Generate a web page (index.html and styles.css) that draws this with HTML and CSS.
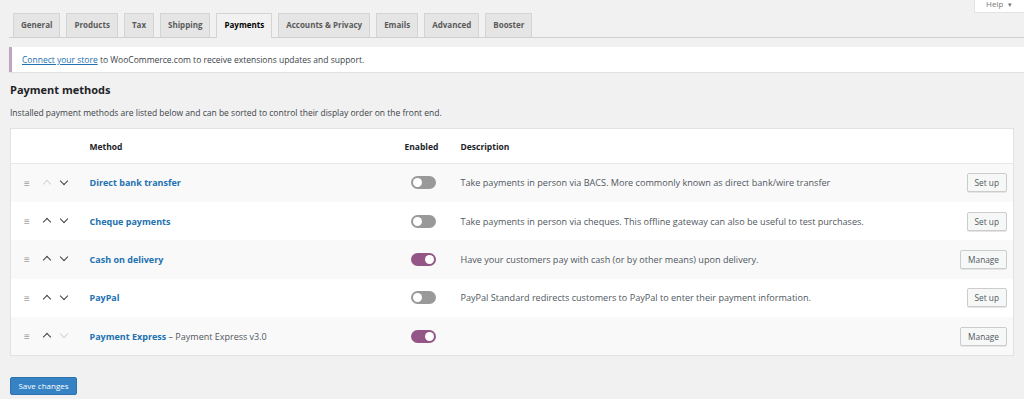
FILE: index.html
```html
<!DOCTYPE html>
<html lang="en">
<head>
    <meta charset="UTF-8">
    <title>WooCommerce settings - Payments</title>
    <link rel="stylesheet" href="styles.css">
</head>
<body>
    <!-- Help tab -->
    <div class="help-bar">
        <span class="help-tab">Help <span class="caret">&#9662;</span></span>
    </div>

    <div class="wrap">
        <!-- Tabs -->
        <nav class="nav-tabs">
            <a class="tab">General</a>
            <a class="tab">Products</a>
            <a class="tab">Tax</a>
            <a class="tab">Shipping</a>
            <a class="tab active">Payments</a>
            <a class="tab">Accounts &amp; Privacy</a>
            <a class="tab">Emails</a>
            <a class="tab">Advanced</a>
            <a class="tab">Booster</a>
        </nav>

        <!-- Notice -->
        <div class="notice">
            <a class="link">Connect your store</a> to WooCommerce.com to receive extensions updates and support.
        </div>

        <h2 class="title">Payment methods</h2>
        <p class="intro">Installed payment methods are listed below and can be sorted to control their display order on the front end.</p>

        <!-- Payment methods table -->
        <table class="methods">
            <thead>
                <tr>
                    <th class="col-sort"></th>
                    <th class="col-name">Method</th>
                    <th class="col-status">Enabled</th>
                    <th class="col-desc">Description</th>
                    <th class="col-action"></th>
                </tr>
            </thead>
            <tbody>
                <tr>
                    <td class="col-sort"><span class="sort-icons"><span class="drag">&#8801;</span><span class="chev up off"></span><span class="chev down"></span></span></td>
                    <td class="col-name"><a class="method-link">Direct bank transfer</a></td>
                    <td class="col-status"><span class="toggle"></span></td>
                    <td class="col-desc">Take payments in person via BACS. More commonly known as direct bank/wire transfer</td>
                    <td class="col-action"><button class="btn">Set up</button></td>
                </tr>
                <tr>
                    <td class="col-sort"><span class="sort-icons"><span class="drag">&#8801;</span><span class="chev up"></span><span class="chev down"></span></span></td>
                    <td class="col-name"><a class="method-link">Cheque payments</a></td>
                    <td class="col-status"><span class="toggle"></span></td>
                    <td class="col-desc">Take payments in person via cheques. This offline gateway can also be useful to test purchases.</td>
                    <td class="col-action"><button class="btn">Set up</button></td>
                </tr>
                <tr>
                    <td class="col-sort"><span class="sort-icons"><span class="drag">&#8801;</span><span class="chev up"></span><span class="chev down"></span></span></td>
                    <td class="col-name"><a class="method-link">Cash on delivery</a></td>
                    <td class="col-status"><span class="toggle on"></span></td>
                    <td class="col-desc">Have your customers pay with cash (or by other means) upon delivery.</td>
                    <td class="col-action"><button class="btn">Manage</button></td>
                </tr>
                <tr>
                    <td class="col-sort"><span class="sort-icons"><span class="drag">&#8801;</span><span class="chev up"></span><span class="chev down"></span></span></td>
                    <td class="col-name"><a class="method-link">PayPal</a></td>
                    <td class="col-status"><span class="toggle"></span></td>
                    <td class="col-desc">PayPal Standard redirects customers to PayPal to enter their payment information.</td>
                    <td class="col-action"><button class="btn">Set up</button></td>
                </tr>
                <tr>
                    <td class="col-sort"><span class="sort-icons"><span class="drag">&#8801;</span><span class="chev up"></span><span class="chev down off"></span></span></td>
                    <td class="col-name"><a class="method-link">Payment Express</a> <span class="method-sub">&ndash; Payment Express v3.0</span></td>
                    <td class="col-status"><span class="toggle on"></span></td>
                    <td class="col-desc"></td>
                    <td class="col-action"><button class="btn">Manage</button></td>
                </tr>
            </tbody>
        </table>

        <button class="btn-primary">Save changes</button>
    </div>
</body>
</html>
```

FILE: styles.css
```css
/* Base */
* { margin: 0; padding: 0; box-sizing: border-box; }

body {
    background: #f1f1f1;
    font-family: 'Open Sans', 'Noto Sans', sans-serif;
    font-size: 8.5px;
    color: #3c434a;
    overflow: hidden;
}

a { cursor: pointer; }

/* Help tab */
.help-bar {
    display: flex;
    justify-content: flex-end;
    height: 12px;
}

.help-tab {
    width: 49px;
    height: 12px;
    background: #ffffff;
    box-shadow: 0 0 0 1px #e3e3e3;
    color: #777;
    font-size: 8px;
    line-height: 8px;
    padding-left: 11px;
}

.caret {
    font-size: 7px;
    margin-left: 3px;
}

.wrap {
    padding: 0 10px 0 9px;
}

/* Tabs */
.nav-tabs {
    display: flex;
    gap: 6px;
    padding-left: 4px;
    margin-top: 1px;
    border-bottom: 1px solid #cfcfcf;
    margin-right: -10px;
}

.tab {
    display: block;
    height: 24px;
    line-height: 22px;
    padding: 0 7px;
    background: #e5e5e5;
    border: 1px solid #d4d4d4;
    border-bottom: none;
    font-weight: 700;
    font-size: 8px;
    color: #5a5a5a;
    margin-bottom: -1px;
}

.tab.active {
    background: #f1f1f1;
    color: #000;
    height: 25px;
}

/* Notice */
.notice {
    margin-top: 9px;
    margin-right: -10px;
    height: 25px;
    line-height: 25px;
    background: #ffffff;
    border-left: 3px solid #c3a4c0;
    box-shadow: 0 1px 1px rgba(0, 0, 0, 0.06);
    padding-left: 10px;
    font-size: 8.5px;
    color: #3c434a;
}

.link {
    color: #2271b1;
    text-decoration: underline;
}

/* Heading */
.title {
    font-size: 11px;
    font-weight: 700;
    color: #1d2327;
    margin: 10px 0 0 1px;
    line-height: 16px;
}

.intro {
    font-size: 8.5px;
    margin: 10px 0 0 1px;
    line-height: 10px;
}

/* Table */
.methods {
    width: 1004px;
    margin: 10px 0 0 1px;
    border-collapse: collapse;
    background: #ffffff;
    border: 1px solid #e2e2e2;
}

.methods th {
    height: 35px;
    text-align: left;
    font-weight: 700;
    font-size: 8.5px;
    color: #1d2327;
    border-bottom: 1px solid #e6e6e6;
}

.methods td {
    height: 38.4px;
    vertical-align: middle;
}

.methods tbody tr:nth-child(odd) {
    background: #f9f9f9;
}

.col-sort { width: 79px; padding-left: 13px; }
.col-name { width: 315px; }
.col-status { width: 56px; }
.col-action { width: 100px; text-align: right; padding-right: 6px; }

.col-desc {
    color: #50575e;
    font-size: 9.1px;
}

/* Sort icons */
.sort-icons {
    display: flex;
    align-items: center;
}

.drag {
    color: #a0a0a0;
    font-size: 10px;
    width: 17px;
}

.chev {
    width: 17px;
    height: 10px;
    position: relative;
}

.chev::before {
    content: "";
    position: absolute;
    left: 3px;
    width: 5px;
    height: 5px;
    border-left: 1.6px solid #3c434a;
    border-top: 1.6px solid #3c434a;
}

.chev.up::before {
    top: 3px;
    transform: rotate(45deg);
}

.chev.down::before {
    top: 0;
    transform: rotate(225deg);
}

.chev.off::before {
    border-color: #d5d5d5;
}

.method-link {
    color: #2271b1;
    font-weight: 700;
    font-size: 9px;
}

.method-sub {
    color: #50575e;
    font-size: 9px;
}

/* Toggle */
.toggle {
    display: block;
    width: 25px;
    height: 13px;
    margin-left: 6px;
    border-radius: 7px;
    background: #999;
    position: relative;
}

.toggle::after {
    content: "";
    position: absolute;
    top: 2px;
    left: 2px;
    width: 9px;
    height: 9px;
    border-radius: 50%;
    background: #ffffff;
}

.toggle.on {
    background: #935687;
}

.toggle.on::after {
    left: 14px;
}

/* Buttons */
.btn {
    font-family: inherit;
    font-size: 8.3px;
    color: #50575e;
    background: #f6f7f7;
    border: 1px solid #cccccc;
    border-radius: 2px;
    height: 19px;
    padding: 0 7px;
    box-shadow: 0 1px 0 #e5e5e5;
}

.btn-primary {
    display: block;
    margin: 21px 0 0 1px;
    height: 18px;
    width: 67px;
    font-family: inherit;
    font-size: 8px;
    color: #ffffff;
    background: #3582c4;
    border: 1px solid #2f73ae;
    border-radius: 2px;
}
```
